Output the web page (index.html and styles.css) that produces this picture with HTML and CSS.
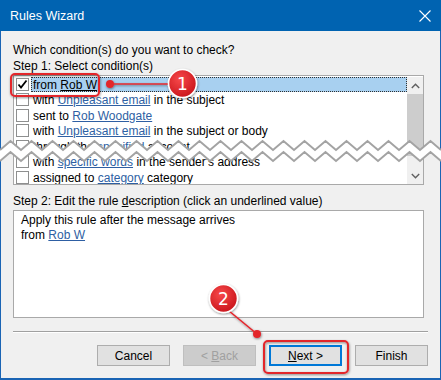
FILE: index.html
```html
<!DOCTYPE html>
<html>
<head>
<meta charset="utf-8">
<link rel="stylesheet" href="styles.css">
</head>
<body>
<div class="window">
  <div class="titlebar">
    <span class="title">Rules Wizard</span>
    <svg class="close" width="12" height="12" viewBox="0 0 12 12"><path d="M0.5 0.5 L11.5 11.5 M11.5 0.5 L0.5 11.5" stroke="#fff" stroke-width="1.1" fill="none"/></svg>
  </div>
  <div class="content">
    <div class="question">Which condition(s) do you want to check?</div>
    <div class="label">Step 1: Select condition(s)</div>
    <div class="listbox">
      <div class="rows">
        <div class="row"><span class="cb checked"><svg width="11" height="11" viewBox="0 0 11 11"><path d="M1.5 5.5 L4 8.5 L9.5 1.5" stroke="#000" stroke-width="1.8" fill="none"/></svg></span><span class="txt selected">from <u class="plain">Rob W</u></span></div>
        <div class="row"><span class="cb"></span><span class="txt">with <a>Unpleasant email</a> in the subject</span></div>
        <div class="row"><span class="cb"></span><span class="txt">sent to <a>Rob Woodgate</a></span></div>
        <div class="row"><span class="cb"></span><span class="txt">with <a>Unpleasant email</a> in the subject or body</span></div>
        <div class="row"><span class="cb"></span><span class="txt">through the <a>specified</a> account</span></div>
        <div class="row"><span class="cb"></span><span class="txt">with <a>specific words</a> in the sender's address</span></div>
        <div class="row"><span class="cb"></span><span class="txt">assigned to <a>category</a> category</span></div>
      </div>
      <div class="scrollbar">
        <div class="arrow"><svg width="9" height="6" viewBox="0 0 9 6"><path d="M0.8 5 L4.5 1.3 L8.2 5" stroke="#606060" stroke-width="1.4" fill="none"/></svg></div>
        <div class="track"><div class="thumb"></div></div>
        <div class="arrow"><svg width="9" height="6" viewBox="0 0 9 6"><path d="M0.8 1 L4.5 4.7 L8.2 1" stroke="#606060" stroke-width="1.4" fill="none"/></svg></div>
      </div>
    </div>
    <div class="label step2">Step 2: Edit the rule <u class="plain">d</u>escription (click an underlined value)</div>
    <div class="descbox">
      <div>Apply this rule after the message arrives</div>
      <div>from <a>Rob W</a></div>
    </div>
    <div class="separator"></div>
    <div class="buttons">
      <button class="btn">Cancel</button>
      <button class="btn disabled">&lt; <u class="plain">B</u>ack</button>
      <button class="btn default"><u class="plain">N</u>ext &gt;</button>
      <button class="btn">Finish</button>
    </div>
  </div>

  <svg class="tear" width="441" height="30" viewBox="0 0 441 30">
    <polygon fill="#fff" points="0,12 10.5,3 21,12 31.5,3 42,12 52.5,3 63,12 73.5,3 84,12 94.5,3 105,12 115.5,3 126,12 136.5,3 147,12 157.5,3 168,12 178.5,3 189,12 199.5,3 210,12 220.5,3 231,12 241.5,3 252,12 262.5,3 273,12 283.5,3 294,12 304.5,3 315,12 325.5,3 336,12 346.5,3 357,12 367.5,3 378,12 388.5,3 399,12 409.5,3 420,12 430.5,3 441,12 441,23 430.5,14 420,23 409.5,14 399,23 388.5,14 378,23 367.5,14 357,23 346.5,14 336,23 325.5,14 315,23 304.5,14 294,23 283.5,14 273,23 262.5,14 252,23 241.5,14 231,23 220.5,14 210,23 199.5,14 189,23 178.5,14 168,23 157.5,14 147,23 136.5,14 126,23 115.5,14 105,23 94.5,14 84,23 73.5,14 63,23 52.5,14 42,23 31.5,14 21,23 10.5,14 0,23"/>
    <polyline fill="none" stroke="#a3a3a3" stroke-width="2" points="0,12 10.5,3 21,12 31.5,3 42,12 52.5,3 63,12 73.5,3 84,12 94.5,3 105,12 115.5,3 126,12 136.5,3 147,12 157.5,3 168,12 178.5,3 189,12 199.5,3 210,12 220.5,3 231,12 241.5,3 252,12 262.5,3 273,12 283.5,3 294,12 304.5,3 315,12 325.5,3 336,12 346.5,3 357,12 367.5,3 378,12 388.5,3 399,12 409.5,3 420,12 430.5,3 441,12"/>
    <polyline fill="none" stroke="#a3a3a3" stroke-width="2" points="0,23 10.5,14 21,23 31.5,14 42,23 52.5,14 63,23 73.5,14 84,23 94.5,14 105,23 115.5,14 126,23 136.5,14 147,23 157.5,14 168,23 178.5,14 189,23 199.5,14 210,23 220.5,14 231,23 241.5,14 252,23 262.5,14 273,23 283.5,14 294,23 304.5,14 315,23 325.5,14 336,23 346.5,14 357,23 367.5,14 378,23 388.5,14 399,23 409.5,14 420,23 430.5,14 441,23"/>
  </svg>

  <svg class="annot" width="441" height="380" viewBox="0 0 441 380">
    <defs>
      <radialGradient id="rg" cx="0.4" cy="0.35" r="0.7">
        <stop offset="0" stop-color="#f7484a"/>
        <stop offset="1" stop-color="#c8141a"/>
      </radialGradient>
      <filter id="sh" x="-30%" y="-30%" width="160%" height="160%">
        <feDropShadow dx="0.5" dy="1" stdDeviation="1" flood-color="#000" flood-opacity="0.45"/>
      </filter>
    </defs>
    <g filter="url(#sh)">
      <rect x="11" y="74" width="88" height="22" rx="4" fill="none" stroke="#e3262c" stroke-width="2"/>
      <line x1="110" y1="84" x2="170" y2="84" stroke="#e3262c" stroke-width="1.6"/>
      <circle cx="110" cy="84" r="4" fill="#e3262c"/>
      <circle cx="182.5" cy="83.5" r="14" fill="url(#rg)" stroke="#fff" stroke-width="1.6"/>
      <rect x="264" y="341" width="84" height="32" rx="4" fill="none" stroke="#e3262c" stroke-width="2"/>
      <line x1="223" y1="306" x2="257" y2="334" stroke="#e3262c" stroke-width="1.6"/>
      <circle cx="257" cy="334" r="4" fill="#e3262c"/>
      <circle cx="223.5" cy="298.5" r="14" fill="url(#rg)" stroke="#fff" stroke-width="1.6"/>
    </g>
  </svg>
  <div class="badge b1">1</div>
  <div class="badge b2">2</div>
</div>
</body>
</html>
```

FILE: styles.css
```css
* { box-sizing: border-box; }
html, body { margin: 0; padding: 0; }
body {
  width: 441px;
  height: 380px;
  font-family: "Liberation Sans", Arial, sans-serif;
  font-size: 12px;
  color: #000;
  overflow: hidden;
}
.window {
  position: relative;
  width: 441px;
  height: 380px;
  background: #f0f0f0;
  border: 1px solid #1a64b4;
  border-top: none;
  border-bottom-width: 2px;
  display: flex;
  flex-direction: column;
}
.titlebar {
  height: 31px;
  background: #0063b1;
  color: #fff;
  display: flex;
  align-items: center;
  justify-content: space-between;
  padding: 0 10px 0 10px;
  margin: 0 -1px;
  flex: none;
}
.title { font-size: 12.5px; padding-top: 1px; }
.close { margin-right: 0; }
.content {
  flex: 1;
  display: flex;
  flex-direction: column;
  padding: 11px 12px 0 12px;
}
.question { height: 16px; line-height: 16px; }
.label { height: 16px; line-height: 16px; margin-bottom: 1px; }
.step2 { margin-top: 8px; margin-bottom: 0; height: 17px; }
u.plain { text-decoration: underline; }
a {
  color: #2e5fa3;
  text-decoration: underline;
}
.listbox {
  height: 110px;
  margin-right: 4px;
  border: 1px solid #a9a9a9;
  background: #fff;
  display: flex;
  overflow: hidden;
}
.rows {
  flex: 1;
  padding-top: 0.5px;
  padding-left: 2px;
}
.row {
  height: 15.5px;
  display: flex;
  align-items: center;
}
.cb {
  width: 13px;
  height: 13px;
  border: 1px solid #8e8f8f;
  background: #fff;
  margin-right: 2px;
  display: flex;
  align-items: center;
  justify-content: center;
  flex: none;
}
.txt {
  height: 15px;
  line-height: 13px;
  padding: 1px 1px 0 1px;
  border: 1px solid transparent;
  white-space: nowrap;
}
.txt.selected {
  flex: 1;
  background: #a8d0f0;
  border: 1px dotted #303030;
}
.scrollbar {
  width: 16px;
  background: #f0f0f0;
  display: flex;
  flex-direction: column;
  margin-top: 1px;
}
.arrow {
  height: 17px;
  display: flex;
  align-items: center;
  justify-content: center;
  flex: none;
}
.track { flex: 1; }
.thumb { width: 16px; height: 62px; background: #cdcdcd; }
.descbox {
  height: 108px;
  margin-right: 4px;
  border: 1px solid #a9a9a9;
  background: #fff;
  padding: 2px 7px;
  line-height: 15px;
}
.separator {
  margin-top: 13px;
  height: 2px;
  border-top: 1px solid #a0a0a0;
  border-bottom: 1px solid #fff;
}
.buttons {
  margin-top: 12px;
  display: flex;
  justify-content: flex-end;
  gap: 13px;
}
.btn {
  width: 73px;
  height: 21px;
  font-family: inherit;
  font-size: 12px;
  background: #e1e1e1;
  border: 1px solid #adadad;
  color: #000;
  padding: 0;
  margin: 0;
}
.btn.disabled {
  background: #cccccc;
  border-color: #bfbfbf;
  color: #a0a0a0;
}
.btn.default {
  border: 2px solid #0078d7;
}
.tear {
  position: absolute;
  left: -1px;
  top: 138px;
}
.annot {
  position: absolute;
  left: -1px;
  top: 0;
  pointer-events: none;
}
.badge {
  position: absolute;
  width: 28px;
  height: 28px;
  line-height: 28px;
  text-align: center;
  color: #fff;
  font-size: 17px;
  font-family: "DejaVu Sans", sans-serif;
}
.b1 { left: 167.5px; top: 69.5px; }
.b2 { left: 208.5px; top: 284.5px; }
```
